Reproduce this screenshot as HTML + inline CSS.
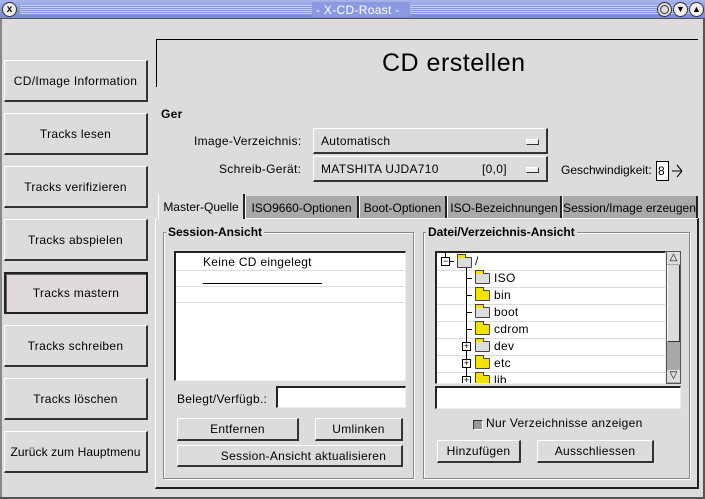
<!DOCTYPE html>
<html><head><meta charset="utf-8"><style>
*{margin:0;padding:0;box-sizing:border-box}
body{width:705px;height:499px;background:#dcdcdc;font-family:"Liberation Sans","DejaVu Sans",sans-serif;font-size:12px;color:#000;position:relative;overflow:hidden;letter-spacing:0.3px}
.a{position:absolute}
.btn{position:absolute;background:#dcdcdc;border-top:1px solid #fff;border-left:1px solid #fff;border-right:2px solid #333;border-bottom:2px solid #333;text-align:center;display:flex;align-items:center;justify-content:center;font-size:12px;white-space:nowrap}
.lb{left:4px;width:144px;height:42px}
.t{position:absolute;white-space:nowrap}
.sunk{position:absolute;background:#fff;border-top:2px solid #222;border-left:2px solid #222;border-right:1px solid #eee;border-bottom:1px solid #eee}
.frame{position:absolute;border:1px solid #888;box-shadow:1px 1px 0 #fff inset,1px 1px 0 #fff}
.tab{position:absolute;top:196px;height:23px;background:#a9a9a9;border-left:1px solid #fff;border-right:2px solid #222;font-size:12px;display:flex;align-items:center;justify-content:center;white-space:nowrap;letter-spacing:0}
.row{position:absolute;left:0;right:0;height:1px;background:#ddd}
.fold{position:absolute;width:15px;height:11px;background:#f2e200;border:1px solid #444;border-radius:1px}
.fold:before{content:"";position:absolute;left:-1px;top:-4px;width:7px;height:3px;background:#f2e200;border:1px solid #444;border-bottom:none}
.pm{position:absolute;width:9px;height:9px;border:1px solid #000;background:#fff;font-size:9px;line-height:7px;text-align:center;letter-spacing:0}
</style></head><body>
<!-- title bar -->
<div class="a" style="left:0;top:0;width:705px;height:19px;background:linear-gradient(#a8b4ec,#8796dc 60%,#7a89d4);border-bottom:1px solid #555"></div>
<div class="a" style="left:20px;top:5px;width:675px;height:9px;background:repeating-linear-gradient(#c8d0f4 0 1px,#8796dc 1px 2px)"></div>
<div class="a" style="left:312px;top:2px;width:98px;height:15px;background:#8b9ae0"></div>
<div class="t" style="left:316px;top:3px;color:#fff;font-size:12px">- X-CD-Roast -</div>
<div class="a" style="left:2px;top:2px;width:15px;height:15px;border-radius:50%;background:#eee;border:1px solid #333;font-size:10px;line-height:13px;text-align:center;font-weight:bold;letter-spacing:0">x</div>
<div class="a" style="left:657px;top:2px;width:15px;height:15px;border-radius:50%;background:#ddd;border:1px solid #333"></div>
<div class="a" style="left:660px;top:5px;width:9px;height:9px;border-radius:50%;border:1px solid #333"></div>
<div class="a" style="left:673px;top:2px;width:15px;height:15px;border-radius:50%;background:#eee;border:1px solid #333;font-size:9px;line-height:13px;text-align:center;letter-spacing:0">▼</div>
<div class="a" style="left:689px;top:2px;width:15px;height:15px;border-radius:50%;background:#eee;border:1px solid #333;font-size:9px;line-height:13px;text-align:center;letter-spacing:0">▲</div>

<!-- left buttons -->
<div class="btn lb" style="top:60px">CD/Image Information</div>
<div class="btn lb" style="top:113px">Tracks lesen</div>
<div class="btn lb" style="top:166px">Tracks verifizieren</div>
<div class="btn lb" style="top:219px">Tracks abspielen</div>
<div class="btn lb" style="top:272px;background:#e0dadf;border:2px solid #222;box-shadow:inset 1px 1px 0 #666">Tracks mastern</div>
<div class="btn lb" style="top:325px">Tracks schreiben</div>
<div class="btn lb" style="top:378px">Tracks löschen</div>
<div class="btn lb" style="top:431px;letter-spacing:0.1px">Zurück zum Hauptmenu</div>

<!-- header -->
<div class="a" style="left:156px;top:39px;width:542px;height:1px;background:#000"></div>
<div class="a" style="left:156px;top:39px;width:1px;height:48px;background:#000"></div>
<div class="t" style="left:382px;top:49px;font-size:25px;letter-spacing:0.5px">CD erstellen</div>

<div class="t" style="left:161px;top:107px;font-weight:bold">Ger</div>
<div class="t" style="left:194px;top:134px">Image-Verzeichnis:</div>
<div class="t" style="left:219px;top:162px">Schreib-Gerät:</div>
<div class="btn" style="left:313px;top:128px;width:235px;height:26px;justify-content:flex-start;padding-left:7px">Automatisch</div>
<div class="a" style="left:526px;top:139px;width:13px;height:6px;background:#eee;border:1px solid #333;border-top-color:#fff;border-left-color:#fff"></div>
<div class="btn" style="left:313px;top:156px;width:235px;height:26px;justify-content:flex-start;padding-left:7px">MATSHITA UJDA710</div>
<div class="t" style="left:482px;top:162px">[0,0]</div>
<div class="a" style="left:526px;top:167px;width:13px;height:6px;background:#eee;border:1px solid #333;border-top-color:#fff;border-left-color:#fff"></div>
<div class="t" style="left:561px;top:163px;letter-spacing:0">Geschwindigkeit:</div>
<div class="a" style="left:656px;top:161px;width:13px;height:20px;background:#fff;border:1px solid #000;font-size:12px;padding-left:1px;line-height:18px">8</div>
<svg class="a" style="left:670px;top:160px" width="14" height="22"><path d="M2 11H12M7 5L12 11M7 17L12 11" stroke="#000" fill="none"/></svg>

<!-- tabs -->
<div class="a" style="left:155px;top:218px;width:544px;height:271px;border-left:1px solid #fff;border-right:2px solid #222;border-bottom:2px solid #222"></div>
<div class="tab" style="left:158px;width:87px;background:#dcdcdc;top:194px;height:25px">Master-Quelle</div>
<div class="tab" style="left:245px;width:114px">ISO9660-Optionen</div>
<div class="tab" style="left:359px;width:88px">Boot-Optionen</div>
<div class="tab" style="left:447px;width:115px">ISO-Bezeichnungen</div>
<div class="tab" style="left:562px;width:136px">Session/Image erzeugen</div>
<div class="a" style="left:245px;top:218px;width:453px;height:1px;background:#fff"></div>

<!-- session frame -->
<div class="frame" style="left:163px;top:232px;width:251px;height:247px"></div>
<div class="t" style="left:166px;top:225px;font-weight:bold;background:#dcdcdc;padding:0 2px;letter-spacing:0">Session-Ansicht</div>
<div class="sunk" style="left:174px;top:251px;width:232px;height:130px">
 <div class="row" style="top:17px"></div><div class="row" style="top:33px"></div><div class="row" style="top:49px"></div>
</div>
<div class="t" style="left:203px;top:255px">Keine CD eingelegt</div>
<div class="a" style="left:203px;top:283px;width:119px;height:1px;background:#000"></div>
<div class="t" style="left:177px;top:392px">Belegt/Verfügb.:</div>
<div class="sunk" style="left:276px;top:386px;width:130px;height:22px"></div>
<div class="btn" style="left:177px;top:418px;width:122px;height:23px">Entfernen</div>
<div class="btn" style="left:315px;top:418px;width:88px;height:23px">Umlinken</div>
<div class="btn" style="left:177px;top:445px;width:226px;height:22px;padding-left:28px">Session-Ansicht aktualisieren</div>

<!-- datei frame -->
<div class="frame" style="left:423px;top:232px;width:267px;height:247px"></div>
<div class="t" style="left:426px;top:225px;font-weight:bold;background:#dcdcdc;padding:0 2px;letter-spacing:0">Datei/Verzeichnis-Ansicht</div>
<div class="sunk" style="left:435px;top:251px;width:231px;height:133px;overflow:hidden">
 <div class="row" style="top:17px"></div><div class="row" style="top:34px"></div><div class="row" style="top:51px"></div><div class="row" style="top:68px"></div><div class="row" style="top:85px"></div><div class="row" style="top:102px"></div><div class="row" style="top:119px"></div>
 <div class="a" style="left:8px;top:0;width:1px;height:4px;background:#000"></div>
 <div class="pm" style="left:4px;top:4px">−</div>
 <div class="a" style="left:13px;top:8px;width:4px;height:1px;background:#000"></div>
 <div class="fold" style="left:20px;top:4px;background:#ddd"></div>
 <div class="t" style="left:38px;top:1px">/</div>
 <div class="a" style="left:29px;top:15px;width:1px;height:120px;background:#000"></div>
 <div class="a" style="left:29px;top:25px;width:6px;height:1px;background:#000"></div>
 <div class="a" style="left:29px;top:42px;width:6px;height:1px;background:#000"></div>
 <div class="a" style="left:29px;top:59px;width:6px;height:1px;background:#000"></div>
 <div class="a" style="left:29px;top:76px;width:6px;height:1px;background:#000"></div>
 <div class="pm" style="left:25px;top:89px">+</div>
 <div class="pm" style="left:25px;top:106px">+</div>
 <div class="pm" style="left:25px;top:123px">+</div>
 <div class="fold" style="left:38px;top:20px;background:#ddd"></div><div class="t" style="left:57px;top:18px">ISO</div>
 <div class="fold" style="left:38px;top:37px"></div><div class="t" style="left:57px;top:35px">bin</div>
 <div class="fold" style="left:38px;top:54px;background:#ddd"></div><div class="t" style="left:57px;top:52px">boot</div>
 <div class="fold" style="left:38px;top:71px"></div><div class="t" style="left:57px;top:69px">cdrom</div>
 <div class="fold" style="left:38px;top:88px;background:#ddd"></div><div class="t" style="left:57px;top:86px">dev</div>
 <div class="fold" style="left:38px;top:105px"></div><div class="t" style="left:57px;top:103px">etc</div>
 <div class="fold" style="left:38px;top:122px"></div><div class="t" style="left:57px;top:120px">lib</div>
</div>
<div class="a" style="left:666px;top:251px;width:15px;height:133px;background:#a9a9a9;border:1px solid #555"></div>
<div class="a" style="left:667px;top:252px;width:13px;height:12px;background:#dcdcdc;font-size:10px;line-height:12px;text-align:center;letter-spacing:0">△</div>
<div class="a" style="left:667px;top:265px;width:13px;height:77px;background:#dcdcdc;border-right:1px solid #333;border-bottom:1px solid #333;border-left:1px solid #fff"></div>
<div class="a" style="left:667px;top:370px;width:13px;height:12px;background:#dcdcdc;font-size:10px;line-height:12px;text-align:center;letter-spacing:0">▽</div>
<div class="sunk" style="left:435px;top:386px;width:246px;height:23px"></div>
<div class="a" style="left:473px;top:420px;width:10px;height:10px;background:#999;border-top:1px solid #333;border-left:1px solid #333;border-right:1px solid #fff;border-bottom:1px solid #fff"></div>
<div class="t" style="left:486px;top:416px">Nur Verzeichnisse anzeigen</div>
<div class="btn" style="left:437px;top:440px;width:84px;height:23px">Hinzufügen</div>
<div class="btn" style="left:537px;top:440px;width:117px;height:23px">Ausschliessen</div>

<div class="a" style="left:0;top:19px;width:2px;height:480px;background:#888"></div>
<div class="a" style="left:703px;top:19px;width:2px;height:480px;background:#555"></div>
<div class="a" style="left:0;top:497px;width:705px;height:2px;background:#555"></div>
</body></html>
